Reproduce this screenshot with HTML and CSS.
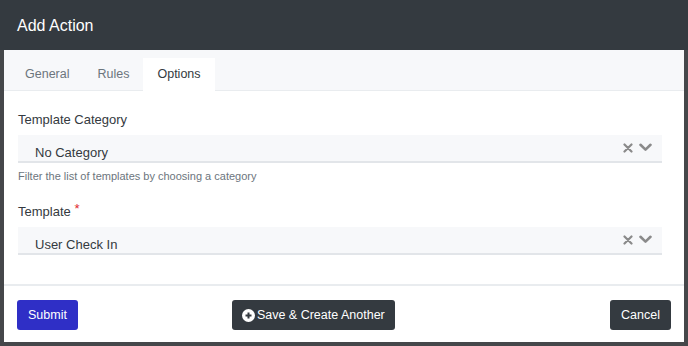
FILE: index.html
```html
<!DOCTYPE html>
<html lang="en">
<head>
    <meta charset="UTF-8">
    <title>Add Action</title>
    <link rel="stylesheet" href="styles.css">
</head>
<body>
    <div class="modal">
        <div class="modal-header">
            <h1>Add Action</h1>
        </div>

        <div class="modal-inner">
            <div class="tabs">
                <div class="tab">General</div>
                <div class="tab">Rules</div>
                <div class="tab active">Options</div>
            </div>

            <div class="modal-body">
                <div class="form-group">
                    <label>Template Category</label>
                    <div class="select">
                        <span class="select-value">No Category</span>
                        <span class="select-icons">
                            <svg class="icon-clear" width="10" height="10" viewBox="0 0 10 10"><path d="M1.5 1.5 L8.5 8.5 M8.5 1.5 L1.5 8.5" stroke="#8a8a8a" stroke-width="2.2" stroke-linecap="round"/></svg>
                            <svg class="icon-chevron" width="13" height="9" viewBox="0 0 13 9"><path d="M1.5 1.8 L6.5 6.6 L11.5 1.8" fill="none" stroke="#8a8a8a" stroke-width="2.6" stroke-linecap="round" stroke-linejoin="round"/></svg>
                        </span>
                    </div>
                    <div class="help-text">Filter the list of templates by choosing a category</div>
                </div>

                <div class="form-group">
                    <label>Template <span class="required">*</span></label>
                    <div class="select">
                        <span class="select-value">User Check In</span>
                        <span class="select-icons">
                            <svg class="icon-clear" width="10" height="10" viewBox="0 0 10 10"><path d="M1.5 1.5 L8.5 8.5 M8.5 1.5 L1.5 8.5" stroke="#8a8a8a" stroke-width="2.2" stroke-linecap="round"/></svg>
                            <svg class="icon-chevron" width="13" height="9" viewBox="0 0 13 9"><path d="M1.5 1.8 L6.5 6.6 L11.5 1.8" fill="none" stroke="#8a8a8a" stroke-width="2.6" stroke-linecap="round" stroke-linejoin="round"/></svg>
                        </span>
                    </div>
                </div>
            </div>

            <div class="modal-footer">
                <button class="btn btn-primary">Submit</button>
                <button class="btn btn-dark btn-another">
                    <svg width="13" height="13" viewBox="0 0 13 13"><circle cx="6.5" cy="6.5" r="6.5" fill="#fff"/><path d="M6.5 3.5 V9.5 M3.5 6.5 H9.5" stroke="#343a40" stroke-width="2"/></svg>
                    Save &amp; Create Another
                </button>
                <button class="btn btn-dark btn-cancel">Cancel</button>
            </div>
        </div>
    </div>
</body>
</html>
```

FILE: styles.css
```css
body {
    margin: 0;
    background-color: #45474a;
    font-family: "Liberation Sans", Arial, sans-serif;
    color: #343a40;
}
.modal {
    width: 688px;
    height: 346px;
}
.modal-header {
    height: 50px;
    background-color: #343a40;
    padding: 1px 17px 0;
    display: flex;
    align-items: center;
    box-sizing: border-box;
}
.modal-header h1 {
    margin: 0;
    font-size: 16px;
    font-weight: normal;
    color: #fff;
}
.modal-inner {
    margin: 0 4px;
    height: 292px;
    background-color: #fff;
    display: flex;
    flex-direction: column;
}
.tabs {
    display: flex;
    height: 41px;
    flex-shrink: 0;
    box-sizing: border-box;
    padding: 8px 0 0 7px;
    background-color: #f7f8fa;
    border-bottom: 1px solid #e9ecef;
}
.tab {
    padding: 0 14px;
    font-size: 12.5px;
    line-height: 32px;
    color: #6c757d;
}
.tab.active {
    background-color: #fff;
    color: #343a40;
    height: 33px;
}
.modal-body {
    box-sizing: border-box;
    flex-shrink: 0;
    padding: 19px 22px 0 14px;
    height: 195px;
    border-bottom: 2px solid #e9ecef;
}
.form-group {
    margin-bottom: 15px;
}
label {
    display: block;
    font-size: 13px;
    line-height: 20px;
    margin-bottom: 5px;
}
.required {
    color: #e0282e;
    font-size: 13px;
    vertical-align: 3px;
}
.select {
    height: 28px;
    box-sizing: border-box;
    background-color: #f7f8fa;
    border-bottom: 2px solid #e2e5e9;
    display: flex;
    align-items: flex-end;
    justify-content: space-between;
    padding: 0 10px 0 17px;
}
.select-value {
    font-size: 13px;
    line-height: 16px;
    color: #343a40;
}
.select-icons {
    display: flex;
    align-items: center;
    gap: 6px;
    align-self: center;
    margin-top: -1px;
}
.help-text {
    margin-top: 5px;
    font-size: 11px;
    line-height: 16px;
    color: #6c757d;
}
.modal-footer {
    display: flex;
    align-items: center;
    padding: 14px 13px 0;
}
.btn {
    height: 30px;
    padding: 0 11px;
    border: none;
    border-radius: 3px;
    font-family: "Liberation Sans", Arial, sans-serif;
    font-size: 12.5px;
    color: #fff;
    display: flex;
    align-items: center;
    gap: 3px;
}
.btn-primary {
    background-color: #2f2fc6;
}
.btn-dark {
    background-color: #343a40;
}
.btn-another {
    margin-left: 154px;
    padding: 0 10px;
    gap: 2px;
}
.btn-cancel {
    margin-left: auto;
}
```
